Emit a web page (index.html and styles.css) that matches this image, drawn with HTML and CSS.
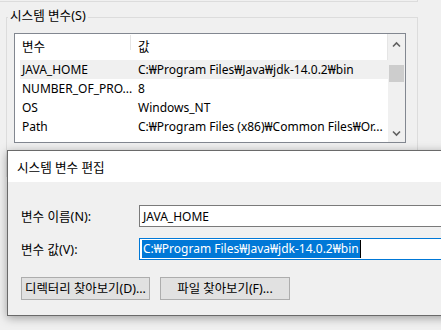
FILE: index.html
```html
<!DOCTYPE html>
<html lang="ko">
<head>
<meta charset="utf-8">
<link rel="stylesheet" href="styles.css">
</head>
<body>
<div class="screen">
  <div class="prev-group"></div>
  <div class="group">
    <div class="group-label">시스템 변수(S)</div>
    <div class="list">
      <div class="table">
        <div class="thead">
          <div class="th c1">변수</div>
          <div class="th c2">값</div>
        </div>
        <div class="row sel"><span class="c1">JAVA_HOME</span><span class="c2">C:₩Program Files₩Java₩jdk-14.0.2₩bin</span></div>
        <div class="row"><span class="c1">NUMBER_OF_PRO...</span><span class="c2">8</span></div>
        <div class="row"><span class="c1">OS</span><span class="c2">Windows_NT</span></div>
        <div class="row"><span class="c1">Path</span><span class="c2">C:₩Program Files (x86)₩Common Files₩Or...</span></div>
      </div>
      <div class="scrollbar">
        <svg class="arrow" width="17" height="17" viewBox="0 0 17 17"><path d="M5 12.5 L8.5 9 L12 12.5" fill="none" stroke="#606060" stroke-width="1.6"/></svg>
        <div class="thumb"></div>
        <div class="track"></div>
        <svg class="arrow" width="17" height="17" viewBox="0 0 17 17"><path d="M5 6.5 L8.5 10 L12 6.5" fill="none" stroke="#606060" stroke-width="1.6"/></svg>
      </div>
    </div>
  </div>

  <div class="dialog">
    <div class="titlebar">시스템 변수 편집</div>
    <div class="dlg-body">
      <div class="form">
        <label class="lbl">변수 이름(N):</label>
        <div class="field">JAVA_HOME</div>
        <label class="lbl">변수 값(V):</label>
        <div class="field focus"><span class="selected">C:₩Program Files₩Java₩jdk-14.0.2₩bin</span><span class="caret"></span></div>
      </div>
      <div class="buttons">
        <div class="btn b1">디렉터리 찾아보기(D)...</div>
        <div class="btn b2">파일 찾아보기(F)...</div>
      </div>
    </div>
  </div>
</div>
</body>
</html>
```

FILE: styles.css
```css
* { box-sizing: border-box; }
html, body { margin: 0; padding: 0; }
body {
  background: #f0f0f0;
  font-family: "Noto Sans", "Noto Sans CJK KR", sans-serif;
  font-size: 12px;
  color: #000;
}
.screen {
  position: relative;
  width: 441px;
  height: 330px;
  overflow: hidden;
  background: #f0f0f0;
}
.prev-group {
  width: 418px;
  height: 2px;
  border-bottom: 1px solid #dcdcdc;
  border-right: 1px solid #dcdcdc;
}
.group {
  margin: 15px 0 0 6px;
  width: 412px;
  height: 160px;
  border: 1px solid #dcdcdc;
}
.group-label {
  width: max-content;
  margin: -10px 0 0 1px;
  padding: 0 2px;
  line-height: 16px;
  background: #f0f0f0;
  color: #000;
  font-size: 12.6px;
}
.list {
  margin: 9px 0 0 7px;
  width: 392px;
  height: 110px;
  border: 1px solid #828790;
  background: #fff;
  display: flex;
}
.table {
  flex: 1;
  display: flex;
  flex-direction: column;
}
.thead {
  margin-left: 5px;
  height: 26px;
  display: flex;
  align-items: stretch;
  font-size: 12.6px;
}
.th {
  display: flex;
  align-items: center;
  padding-bottom: 3px;
}
.th.c1 {
  width: 111px;
  padding-left: 2px;
  position: relative;
}
.th.c1::after {
  content: "";
  position: absolute;
  right: 0;
  top: 1px;
  height: 15px;
  border-right: 1px solid #e5e5e5;
}
.th.c2 {
  flex: 1;
  padding-left: 7px;
  border-right: 1px solid #e5e5e5;
}
.row {
  margin-left: 5px;
  height: 19px;
  display: flex;
  align-items: center;
  white-space: nowrap;
}
.row.sel { background: #f0f0f0; }
.row .c1 { width: 116px; padding-left: 2px; flex: none; }
.row .c2 { padding-left: 2px; }
.scrollbar {
  width: 17px;
  background: #f0f0f0;
  display: flex;
  flex-direction: column;
}
.arrow { display: block; flex: none; }
.thumb {
  margin: 14px 0 0 1px;
  width: 15px;
  height: 17px;
  background: #cdcdcd;
  flex: none;
}
.track { flex: 1; }

.dialog {
  position: absolute;
  left: 7px;
  top: 150px;
  width: 500px;
  height: 166px;
  border: 1px solid #6a6a6a;
  background: #f0f0f0;
  box-shadow: 0 2px 9px rgba(0, 0, 0, 0.35);
}
.titlebar {
  height: 31px;
  background: #fff;
  padding-left: 9px;
  display: flex;
  align-items: center;
  padding-bottom: 1px;
  font-size: 12.6px;
}
.dlg-body {
  padding: 23px 0 0 13px;
}
.form {
  display: grid;
  grid-template-columns: 118px 320px;
  row-gap: 11px;
}
.lbl {
  display: flex;
  align-items: center;
  height: 22px;
  padding-bottom: 1px;
  font-size: 12.6px;
}
.field {
  height: 22px;
  border: 1px solid #7a7a7a;
  background: #fff;
  padding: 1px 2px;
  display: flex;
  align-items: center;
  white-space: nowrap;
  padding-left: 3px;
}
.field.focus {
  border-color: #0078d7;
  padding-left: 2px;
}
.selected {
  background: #0078d7;
  color: #fff;
  height: 18px;
  line-height: 18px;
  padding: 0 1px;
}
.caret {
  width: 1px;
  height: 18px;
  background: #000;
}
.buttons {
  margin-top: 17px;
  display: flex;
  gap: 10px;
}
.btn {
  height: 23px;
  border: 1px solid #adadad;
  background: #e1e1e1;
  display: flex;
  align-items: center;
  justify-content: center;
  white-space: nowrap;
  padding-bottom: 1px;
  font-size: 12.4px;
}
.b1 { width: 129px; }
.b2 { width: 130px; }
```
